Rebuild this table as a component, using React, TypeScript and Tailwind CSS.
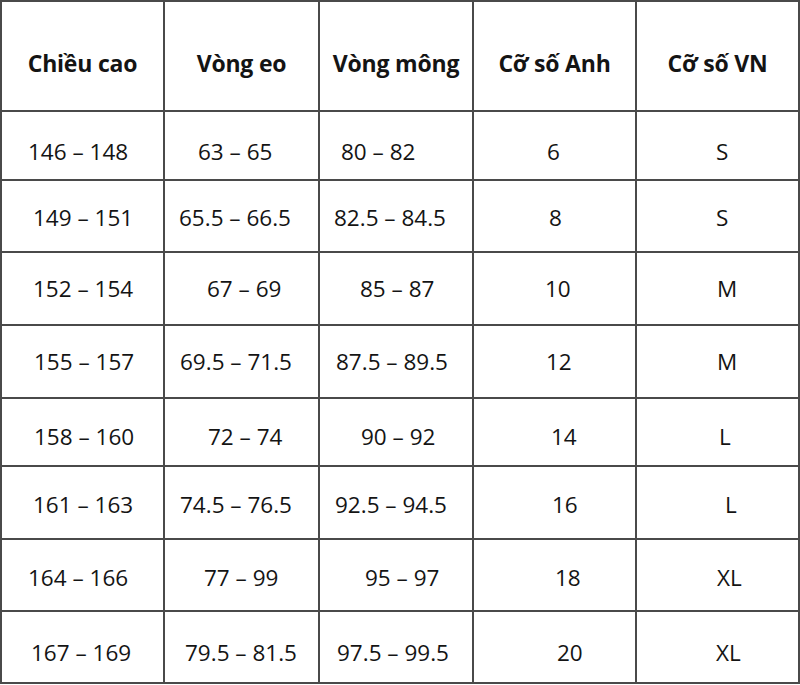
const headers = ['Chiều cao', 'Vòng eo', 'Vòng mông', 'Cỡ số Anh', 'Cỡ số VN'];

// each cell: [text, padding-left class]
const rows: { pt: string; h: string; cells: [string, string][] }[] = [
  {
    pt: 'pt-[12px]',
    h: 'h-[67px]',
    cells: [
      ['146 – 148', 'pl-[26px]'],
      ['63 – 65', 'pl-[33px]'],
      ['80 – 82', 'pl-[21px]'],
      ['6', 'pl-[73px]'],
      ['S', 'pl-[79px]'],
    ],
  },
  {
    pt: 'pt-[4px]',
    h: 'h-[70px]',
    cells: [
      ['149 – 151', 'pl-[31px]'],
      ['65.5 – 66.5', 'pl-[14px]'],
      ['82.5 – 84.5', 'pl-[14px]'],
      ['8', 'pl-[75px]'],
      ['S', 'pl-[79px]'],
    ],
  },
  {
    pt: 'pt-0',
    h: 'h-[71px]',
    cells: [
      ['152 – 154', 'pl-[31px]'],
      ['67 – 69', 'pl-[42px]'],
      ['85 – 87', 'pl-[40px]'],
      ['10', 'pl-[71px]'],
      ['M', 'pl-[80px]'],
    ],
  },
  {
    pt: 'pt-0',
    h: 'h-[71px]',
    cells: [
      ['155 – 157', 'pl-[32px]'],
      ['69.5 – 71.5', 'pl-[15px]'],
      ['87.5 – 89.5', 'pl-[16px]'],
      ['12', 'pl-[72px]'],
      ['M', 'pl-[80px]'],
    ],
  },
  {
    pt: 'pt-[10px]',
    h: 'h-[66px]',
    cells: [
      ['158 – 160', 'pl-[32px]'],
      ['72 – 74', 'pl-[43px]'],
      ['90 – 92', 'pl-[41px]'],
      ['14', 'pl-[77px]'],
      ['L', 'pl-[82px]'],
    ],
  },
  {
    pt: 'pt-[4px]',
    h: 'h-[71px]',
    cells: [
      ['161 – 163', 'pl-[31px]'],
      ['74.5 – 76.5', 'pl-[15px]'],
      ['92.5 – 94.5', 'pl-[15px]'],
      ['16', 'pl-[78px]'],
      ['L', 'pl-[88px]'],
    ],
  },
  {
    pt: 'pt-[6px]',
    h: 'h-[70px]',
    cells: [
      ['164 – 166', 'pl-[26px]'],
      ['77 – 99', 'pl-[39px]'],
      ['95 – 97', 'pl-[45px]'],
      ['18', 'pl-[81px]'],
      ['XL', 'pl-[80px]'],
    ],
  },
  {
    pt: 'pt-[12px]',
    h: 'h-[70px]',
    cells: [
      ['167 – 169', 'pl-[29px]'],
      ['79.5 – 81.5', 'pl-[20px]'],
      ['97.5 – 99.5', 'pl-[17px]'],
      ['20', 'pl-[83px]'],
      ['XL', 'pl-[79px]'],
    ],
  },
];

export default function App() {
  return (
    <div className="w-[800px] h-[685px] bg-white" style={{ fontFamily: '"Open Sans", "Noto Sans", sans-serif' }}>
      <div className="grid grid-cols-[161px_153px_152px_161px_161px] gap-[2px] border-2 border-[#4a4a4a] bg-[#4a4a4a] text-[#141414]">
        {/* header */}
        {headers.map((h) => (
          <div key={h} className="h-[108px] bg-white flex items-center justify-center pt-[14px] text-[23px] font-bold tracking-[-0.2px] whitespace-nowrap">
            {h}
          </div>
        ))}

        {/* body rows */}
        {rows.map((row, i) =>
          row.cells.map(([text, pl], j) => (
            <div key={`${i}-${j}`} className={`${row.h} ${row.pt} ${pl} bg-white flex items-center text-[22.5px] whitespace-nowrap`}>
              {text}
            </div>
          ))
        )}
      </div>
    </div>
  );
}
